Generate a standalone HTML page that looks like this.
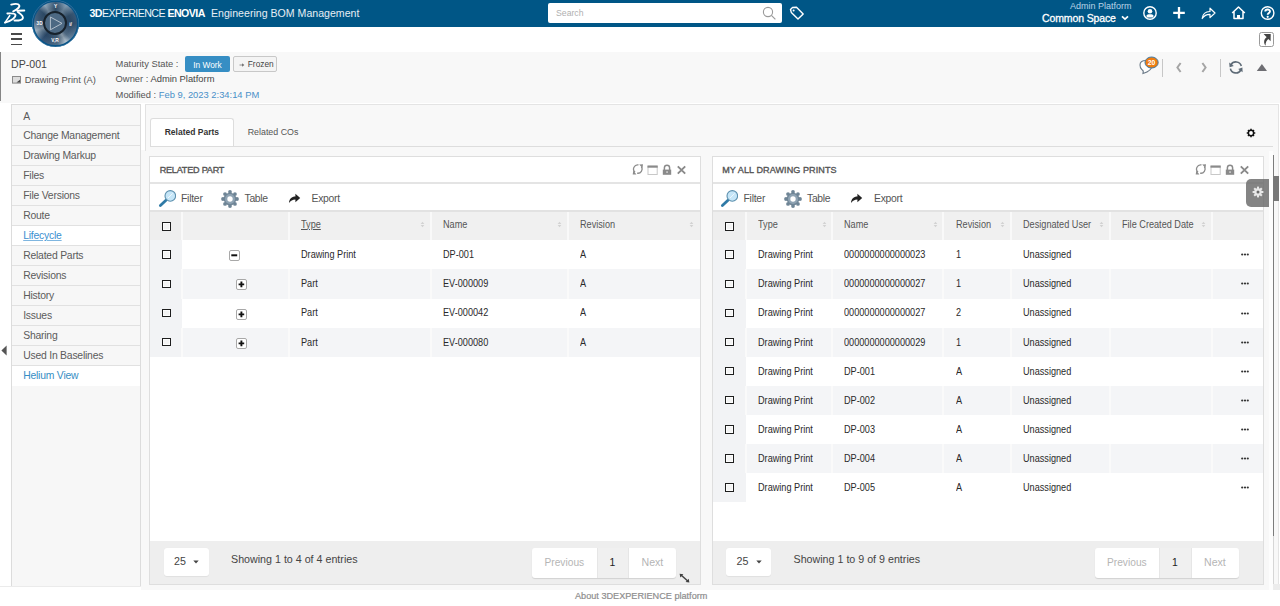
<!DOCTYPE html>
<html><head><meta charset="utf-8">
<style>
*{margin:0;padding:0;box-sizing:border-box}
html,body{width:1280px;height:606px;overflow:hidden;background:#fff;font-family:"Liberation Sans",sans-serif;color:#333}
.a{position:absolute}
.t{position:absolute;white-space:pre;line-height:1}
#top{left:0;top:0;width:1280px;height:27px;background:#005686}
#band{left:0;top:52px;width:1280px;height:51px;background:#f8f8f8}
#side{left:11px;top:104px;width:130px;height:482px;background:#f7f7f7;border:1px solid #dcdcdc;border-bottom:none}
.si{position:absolute;left:0;width:128px;height:20px;border-bottom:1px solid #e1e1e1;font-size:10.4px;letter-spacing:-0.22px;color:#5b5b5b;padding-left:11.2px;line-height:19.5px;white-space:pre}
#content{left:145px;top:104px;width:1134px;height:486px;background:#f8f8f8;border-top:1px solid #e4e4e4;border-right:1px solid #e4e4e4}
.panel{position:absolute;top:156px;height:429px;background:#fff;border:1px solid #dedede}
.ph{position:absolute;left:0;top:0;right:0;height:27px;border-bottom:2px solid #e4e4e4;background:#fff}
.pt{position:absolute;left:9.7px;top:9px;font-size:9.05px;font-weight:normal;-webkit-text-stroke:0.35px #555;letter-spacing:-0.2px;color:#555;white-space:pre;line-height:1}
.tb{position:absolute;left:0;top:27px;right:0;height:28px;background:#fff;border-bottom:2px solid #e2e2e2}
.thd{position:absolute;left:0;top:55px;right:0;height:29px;background:#f0f0f0}
.row{position:absolute;left:0;right:0;height:29.2px}
.cb{position:absolute;width:8.8px;height:8.4px;border:1.6px solid #1e1e1e;border-radius:0;background:#f4f4f4;box-shadow:inset 0 0 0 0.7px #fff}
.cell{position:absolute;font-size:10.3px;color:#2a2a2a;white-space:pre;line-height:1;transform:scaleX(0.888);transform-origin:0 0}
.hcell{position:absolute;font-size:10.3px;color:#555;white-space:pre;line-height:1;transform:scaleX(0.888);transform-origin:0 0}
.foot{position:absolute;left:0;right:0;bottom:0;height:43px;background:#eeeeee}
.sel{position:absolute;left:13.5px;top:7px;width:45px;height:27.5px;background:#fff;border-radius:3px;box-shadow:0 0.5px 1px rgba(0,0,0,.06)}
.pg{position:absolute;top:6.7px;height:30px;background:#fff;border-radius:3px;box-shadow:0 1px 1px rgba(0,0,0,.12)}
</style></head><body>

<!-- TOP BAR -->
<div id="top" class="a">
  <svg class="a" style="left:0;top:0" width="32" height="27" viewBox="0 0 32 27">
    <g fill="none" stroke="#fff" stroke-linecap="round" stroke-linejoin="round">
      <path d="M11.2 4.6 C14 3.9 18.4 3.6 19.3 5.4 C20 7 16.5 9.8 13.2 11.4" stroke-width="1.9"/>
      <path d="M7.3 13.5 C10 13.3 14.6 13 15.4 14.6 C16.2 17.2 11.5 21.2 5 22.6" stroke-width="1.8"/>
      <path d="M9.8 15.5 L5 22.6" stroke-width="1.5"/>
      <path d="M17.2 10.7 L24.3 10.5" stroke-width="1.9"/>
      <path d="M17.9 12 C20 13.5 23.8 15.8 22.8 18.3 C22 20.2 17.5 20.6 14.5 20.5" stroke-width="1.9"/>
    </g>
  </svg>
  <div class="t" style="left:89.5px;top:7.6px;font-size:10.6px;color:#fff;letter-spacing:-0.53px"><b>3D</b><span style="color:#eef4f8">EXPERIENCE</span> <b>ENOVIA</b></div>
  <div class="t" style="left:211px;top:7.6px;font-size:10.6px;color:#e6eef5">Engineering BOM Management</div>
  <div class="a" style="left:548px;top:3px;width:234px;height:20px;background:#fff;border-radius:2px"></div>
  <div class="t" style="left:556px;top:9px;font-size:8.7px;color:#b0b0b0">Search</div>
  <svg class="a" style="left:762px;top:6px" width="15" height="15" viewBox="0 0 15 15"><circle cx="6" cy="6" r="4.6" fill="none" stroke="#9a9a9a" stroke-width="1.1"/><path d="M9.4 9.4 L13.4 13.4" stroke="#9a9a9a" stroke-width="1.2"/></svg>
  <svg class="a" style="left:789px;top:6px" width="16" height="15" viewBox="0 0 16 15"><path d="M1.5 3.5 L3.5 1.5 L7.5 1.2 L14.2 7.9 L9 13.1 L2.3 6.4 Z" fill="none" stroke="#fff" stroke-width="1.4" stroke-linejoin="round"/><circle cx="4.6" cy="4.4" r="1" fill="#fff"/></svg>
  <div class="t" style="left:1070px;top:2px;font-size:9px;color:#b9d3e6">Admin Platform</div>
  <div class="t" style="left:1042px;top:12.9px;font-size:10.5px;-webkit-text-stroke:0.3px #fff;letter-spacing:-0.12px;color:#fff">Common Space</div>
  <svg class="a" style="left:1120.5px;top:15.2px" width="8" height="6" viewBox="0 0 8 6"><path d="M1 1.4 L4 4.2 L7 1.4" fill="none" stroke="#fff" stroke-width="1.7"/></svg>
  <svg class="a" style="left:1142px;top:6px" width="16" height="15" viewBox="0 0 16 15"><circle cx="8" cy="7" r="6.2" fill="none" stroke="#fff" stroke-width="1.4"/><circle cx="8" cy="5.2" r="2.3" fill="#fff"/><path d="M4.6 11.4 V9.6 C4.8 7.8 11.2 7.8 11.4 9.6 V11.4 Z" fill="#fff"/></svg>
  <svg class="a" style="left:1172px;top:6px" width="14" height="14" viewBox="0 0 14 14"><path d="M7 1 V12.6 M1.2 6.8 H12.8" stroke="#fff" stroke-width="2.3"/></svg>
  <svg class="a" style="left:1201px;top:6px" width="15" height="14" viewBox="0 0 15 14"><path d="M1.2 12.5 C1.8 7.5 5 5.5 9 5.5 V2.2 L14 7 L9 11.6 V8.4 C5.5 8.3 3.2 9.5 1.2 12.5 Z" fill="none" stroke="#fff" stroke-width="1.2" stroke-linejoin="round"/></svg>
  <svg class="a" style="left:1231px;top:6px" width="15" height="14" viewBox="0 0 15 14"><path d="M1.2 7 L7.5 1 L13.8 7 M3 5.8 V12.5 H12 V5.8" fill="none" stroke="#fff" stroke-width="1.5" stroke-linejoin="round"/><rect x="6" y="9" width="3" height="3.5" fill="#fff"/></svg>
  <svg class="a" style="left:1260px;top:6px" width="16" height="15" viewBox="0 0 16 15"><circle cx="7.6" cy="7" r="6.3" fill="none" stroke="#fff" stroke-width="1.4"/><path d="M5.3 5.4 C5.3 2.9 10 2.9 10 5.3 C10 7 7.7 7 7.7 8.8" fill="none" stroke="#fff" stroke-width="1.9"/><circle cx="7.7" cy="10.8" r="1.1" fill="#fff"/></svg>
</div>
<!-- compass -->
<div class="a" style="left:32px;top:0px;width:47px;height:47px;border-radius:50%;background:#0a5486;box-shadow:0 0 0 0.6px #3c7aa6 inset"></div>
<div class="a" style="left:34.3px;top:2.3px;width:42.4px;height:42.4px;border-radius:50%;background:conic-gradient(from 0deg,#3f5f7d 0deg,#8fa9bf 30deg,#3d5d7b 60deg,#38587a 90deg,#6d8aa5 135deg,#c2d2de 150deg,#56748f 175deg,#35567a 220deg,#7e99b1 240deg,#adc0d0 250deg,#4b6a88 280deg,#3a5a79 310deg,#9cb3c6 330deg,#3f5f7d 360deg)"></div>
<div class="a" style="left:34.3px;top:2.3px;width:42.4px;height:42.4px;border-radius:50%;background:radial-gradient(circle,rgba(20,40,60,0.35) 50%,rgba(20,40,60,0) 75%,rgba(200,220,235,0.25) 100%)"></div>
<div class="a" style="left:43.2px;top:11.2px;width:24px;height:24px;border-radius:50%;background:#4d6983;border:2.2px solid #17222c"></div>
<svg class="a" style="left:30px;top:-1px" width="51" height="50" viewBox="0 0 51 50">
  <path d="M20.4 18 L32 24.4 L20.4 30.8 Z" fill="none" stroke="#bfcad4" stroke-width="0.9" stroke-linejoin="round"/>
  <text x="6.6" y="26" font-family="Liberation Sans" font-size="4.6" font-weight="bold" fill="#fff">3D</text>
  <text x="21.2" y="43" font-family="Liberation Sans" font-size="4.8" font-weight="bold" fill="#fff">V,R</text>
  <text x="24" y="9.4" font-family="Liberation Sans" font-size="4.8" font-weight="bold" fill="#fff">Y</text>
  <text x="39.2" y="27" font-family="Liberation Sans" font-size="5" font-weight="bold" fill="#fff">i/</text>
</svg>
<!-- hamburger -->
<div class="a" style="left:11px;top:33px;width:11px;height:1.7px;background:#4a4a4a"></div>
<div class="a" style="left:11px;top:38.4px;width:11px;height:1.7px;background:#4a4a4a"></div>
<div class="a" style="left:11px;top:43.6px;width:11px;height:1.7px;background:#4a4a4a"></div>
<!-- top-right pin icon -->
<div class="a" style="left:1258.5px;top:32px;width:15px;height:14.8px;border:1.4px solid #9a9a9a;border-radius:2.5px;background:#fff"></div>
<svg class="a" style="left:1258.5px;top:32px" width="15" height="15" viewBox="0 0 15 15"><path d="M4.6 1.9 L11.7 1.9 L11.6 9.2 Z" fill="#444"/><path d="M8.8 4.4 C5 6.2 4 10.4 6.6 13.8 C6.4 10.6 7.4 8.2 10.4 6.6 Z" fill="#444"/></svg>


<!-- BAND -->
<div id="band" class="a">
  <div class="a" style="left:0;top:0;width:1.2px;height:48.5px;background:#858585"></div>
  <div class="t" style="left:11px;top:7px;font-size:10.6px;color:#444">DP-001</div>
  <svg class="a" style="left:12px;top:24px" width="9" height="8" viewBox="0 0 9 8"><rect x="0.5" y="0.5" width="8" height="6.6" fill="#ddd" stroke="#8a8a8a" stroke-width="1"/><path d="M4.5 6.6 L8 3.8 V6.6 Z" fill="#444"/></svg>
  <div class="t" style="left:24.7px;top:24px;font-size:9.37px;color:#555">Drawing Print (A)</div>
  <div class="t" style="left:115.6px;top:7.5px;font-size:9.35px;color:#555">Maturity State :</div>
  <div class="a" style="left:185px;top:4px;width:45px;height:16px;background:#368ec4;border-radius:2px"></div>
  <div class="t" style="left:193.3px;top:8.5px;font-size:8.3px;color:#fff">In Work</div>
  <div class="a" style="left:233px;top:4px;width:44px;height:16px;background:#f4f4f4;border:1px solid #c8c8c8;border-radius:2px"></div>
  <svg class="a" style="left:238.5px;top:9.5px" width="6" height="6" viewBox="0 0 6 6"><path d="M0.5 3 H4.5" stroke="#777" stroke-width="0.8"/><path d="M3 1.2 L5.4 3 L3 4.8 Z" fill="#777"/></svg>
  <div class="t" style="left:247.8px;top:8.4px;font-size:8.3px;color:#444">Frozen</div>
  <div class="t" style="left:115.6px;top:23.3px;font-size:9.37px;color:#555">Owner : <span style="color:#444">Admin Platform</span></div>
  <div class="t" style="left:115.6px;top:38.5px;font-size:9.37px;color:#555">Modified : <span style="color:#4a90c8">Feb 9, 2023 2:34:14 PM</span></div>
  <!-- right tools -->
  <svg class="a" style="left:1137px;top:3px" width="24" height="24" viewBox="0 0 24 24">
    <path d="M3 10 C3 7 5.5 5.5 9 5.5 C12.5 5.5 15 7.5 15 10.5 C15 14.5 11 17 6 18.5 C6.5 17 6.8 15.5 4.8 14.5 C3.5 13.5 3 12 3 10 Z" fill="#fff" stroke="#6b7a88" stroke-width="1.1"/>
    <ellipse cx="14.6" cy="7.5" rx="6.6" ry="5.5" fill="#ef7d11" stroke="#3d7aa8" stroke-width="1"/>
    <text x="14.6" y="9.9" text-anchor="middle" font-family="Liberation Sans" font-size="6.8" font-weight="bold" fill="#fff">20</text>
  </svg>
  <div class="a" style="left:1162px;top:6.5px;width:1px;height:18px;background:#c7c7c7"></div>
  <svg class="a" style="left:1175px;top:10px" width="8" height="11" viewBox="0 0 8 11"><path d="M5.6 1 L2.4 5.5 L5.6 10" fill="none" stroke="#a5a5a5" stroke-width="2"/></svg>
  <svg class="a" style="left:1200px;top:10px" width="8" height="11" viewBox="0 0 8 11"><path d="M2.4 1 L5.6 5.5 L2.4 10" fill="none" stroke="#a5a5a5" stroke-width="2"/></svg>
  <div class="a" style="left:1220px;top:6.5px;width:1px;height:18px;background:#c7c7c7"></div>
  <svg class="a" style="left:1228px;top:8px" width="16" height="15" viewBox="0 0 16 15">
    <path d="M13.3 6 A5.6 5.6 0 0 0 3 4.8" fill="none" stroke="#5d6a76" stroke-width="1.6"/>
    <path d="M2.4 8.6 A5.6 5.6 0 0 0 12.8 10" fill="none" stroke="#5d6a76" stroke-width="1.6"/>
    <path d="M1.2 2.5 L1.6 7.2 L5.8 6 Z" fill="#5d6a76"/>
    <path d="M14.6 12.3 L14.4 7.6 L10.2 9 Z" fill="#5d6a76"/>
  </svg>
  <svg class="a" style="left:1256px;top:11px" width="12" height="9" viewBox="0 0 12 9"><path d="M0.8 8 L5.9 1 L11 8 Z" fill="#6e6e73"/></svg>
</div>

<!-- SIDEBAR -->
<div id="side" class="a">
  <div class="si" style="top:0;height:21px;line-height:23.5px">A</div>
  <div class="si" style="top:21px">Change Management</div>
  <div class="si" style="top:41px">Drawing Markup</div>
  <div class="si" style="top:61px">Files</div>
  <div class="si" style="top:81px">File Versions</div>
  <div class="si" style="top:101px">Route</div>
  <div class="si" style="top:121px;background:#fff;color:#3a8fd0;text-decoration:underline;text-decoration-thickness:0.8px;text-underline-offset:1px;text-decoration-color:#7fb6e0">Lifecycle</div>
  <div class="si" style="top:141px">Related Parts</div>
  <div class="si" style="top:161px">Revisions</div>
  <div class="si" style="top:181px">History</div>
  <div class="si" style="top:201px">Issues</div>
  <div class="si" style="top:221px">Sharing</div>
  <div class="si" style="top:241px">Used In Baselines</div>
  <div class="si" style="top:261px;background:#fff;color:#368ec4;border-bottom:none">Helium View</div>
</div>

<!-- CONTENT -->
<div class="a" style="left:0;top:586px;width:144px;height:1.4px;background:#ebebeb"></div>
<div class="a" style="left:141px;top:150px;width:4px;height:440px;background:#f8f8f8"></div>
<div id="content" class="a">
  <div class="a" style="left:0;top:0;width:1px;height:46px;background:#e2e2e2"></div>
  <div class="a" style="left:5px;top:13px;width:84px;height:29px;background:#fff;border:1px solid #dddddd;border-bottom:none;border-radius:3px 3px 0 0"></div>
  <div class="a" style="left:5px;top:41px;width:1123px;height:1px;background:#dddddd"></div>
  
  <div class="t" style="left:19.7px;top:22.9px;font-size:8.5px;font-weight:bold;color:#333">Related Parts</div>
  <div class="t" style="left:102.7px;top:22.9px;font-size:8.86px;color:#555">Related COs</div>
  <svg class="a" style="left:1100.5px;top:22.6px" width="10" height="10" viewBox="0 0 10 10"><g fill="#111"><circle cx="5" cy="5" r="3.4"/><rect x="4.3" y="0.7" width="1.4" height="2" transform="rotate(0 5 5)"/><rect x="4.3" y="0.7" width="1.4" height="2" transform="rotate(45 5 5)"/><rect x="4.3" y="0.7" width="1.4" height="2" transform="rotate(90 5 5)"/><rect x="4.3" y="0.7" width="1.4" height="2" transform="rotate(135 5 5)"/><rect x="4.3" y="0.7" width="1.4" height="2" transform="rotate(180 5 5)"/><rect x="4.3" y="0.7" width="1.4" height="2" transform="rotate(225 5 5)"/><rect x="4.3" y="0.7" width="1.4" height="2" transform="rotate(270 5 5)"/><rect x="4.3" y="0.7" width="1.4" height="2" transform="rotate(315 5 5)"/></g><circle cx="5" cy="5" r="1.9" fill="#fff"/></svg>
</div>
<div class="panel" style="left:149px;width:552px"><div class="ph"><div class="pt">RELATED PART</div><svg class="a" style="left:482px;top:7px" width="58" height="12" viewBox="0 0 58 12">
      <g fill="none" stroke="#8c8c8c" stroke-width="1.3" transform="translate(0.8 0)">
        <path d="M5.7 0.9 A4.2 4.2 0 0 0 2.2 8.2"/><path d="M4.3 9.15 A4.2 4.2 0 0 0 8.6 2.7"/>
      </g>
      <path d="M7.2 0.4 L11 0.3 L10.5 4.1 Z M4.4 10.4 L0.7 10.5 L1.3 6.6 Z" fill="#8c8c8c"/>
      <rect x="16" y="2.3" width="9.2" height="8.2" fill="none" stroke="#c8c8c8" stroke-width="1"/>
      <rect x="15.5" y="1.5" width="10.2" height="2.2" fill="#8a8a8a"/>
      <path d="M32.4 6 V3.8 A2.6 2.6 0 0 1 37.6 3.8 V6" fill="none" stroke="#8a8a8a" stroke-width="1.5"/>
      <rect x="30.8" y="5.6" width="8.4" height="5.2" fill="#8a8a8a"/>
      <rect x="34.3" y="7.2" width="1.5" height="1.8" fill="#d0d0d0"/>
      <path d="M45.8 2.3 L53.2 9.7 M53.2 2.3 L45.8 9.7" stroke="#8a8a8a" stroke-width="1.9"/>
    </svg></div><div class="tb"><svg class="a" style="left:7.5px;top:5.5px" width="18" height="18" viewBox="0 0 18 18">
      <path d="M2.4 15.5 L8 10.2" stroke="#2f7aa6" stroke-width="2.8" stroke-linecap="round"/>
      <circle cx="12.3" cy="5.9" r="5.3" fill="#c6e6f8" stroke="#5d90ae" stroke-width="1.1"/>
      <path d="M10 8 L14.6 3.4" stroke="#fff" stroke-width="0.9" opacity="0.8"/>
    </svg><div class="t" style="left:31px;top:10px;font-size:10.4px;letter-spacing:-0.25px;color:#555">Filter</div><svg class="a" style="left:71px;top:6px" width="18" height="18" viewBox="0 0 18 18">
      <circle cx="16.00" cy="9.00" r="1.9" fill="#6f8596"/><circle cx="13.95" cy="13.95" r="1.9" fill="#6f8596"/><circle cx="9.00" cy="16.00" r="1.9" fill="#6f8596"/><circle cx="4.05" cy="13.95" r="1.9" fill="#6f8596"/><circle cx="2.00" cy="9.00" r="1.9" fill="#6f8596"/><circle cx="4.05" cy="4.05" r="1.9" fill="#6f8596"/><circle cx="9.00" cy="2.00" r="1.9" fill="#6f8596"/><circle cx="13.95" cy="4.05" r="1.9" fill="#6f8596"/><circle cx="9" cy="9" r="6.3" fill="#6f8596"/><circle cx="9" cy="9" r="5" fill="#8fa3b3"/><circle cx="9" cy="9" r="2.7" fill="#fff"/>
    </svg><div class="t" style="left:94.5px;top:10px;font-size:10.4px;letter-spacing:-0.3px;color:#555">Table</div><svg class="a" style="left:137.5px;top:8.5px" width="13" height="11" viewBox="0 0 13 11"><path d="M1 10 C1.2 5.8 3.8 3.6 7.4 3.6 V0.8 L12.2 5 L7.4 9.2 V6.4 C4.6 6.4 2.6 7.6 1 10 Z" fill="#222"/></svg><div class="t" style="left:161.5px;top:10px;font-size:10.4px;letter-spacing:-0.3px;color:#555">Export</div></div><div class="thd"><div class="a" style="left:0;top:0;width:32px;height:29px;background:#eeeeee"></div><div class="a" style="left:31px;top:0;width:2px;height:29px;background:#f9f9f9"></div><div class="a" style="left:138px;top:0;width:2px;height:29px;background:#f9f9f9"></div><div class="a" style="left:280px;top:0;width:2px;height:29px;background:#f9f9f9"></div><div class="a" style="left:417px;top:0;width:2px;height:29px;background:#f9f9f9"></div><div class="cb" style="left:12.3px;top:10.2px"></div><div class="hcell" style="top:7.5px;left:151px;text-decoration:underline;text-decoration-thickness:0.6px;text-underline-offset:1px;">Type</div><svg class="a" style="left:270.0px;top:8.5px" width="5" height="7" viewBox="0 0 5 7"><path d="M0.6 2.9 L2.5 0.7 L4.4 2.9 Z M0.6 4.1 L2.5 6.3 L4.4 4.1 Z" fill="#d2d2d2"/></svg><div class="hcell" style="top:7.5px;left:293px;">Name</div><svg class="a" style="left:407.0px;top:8.5px" width="5" height="7" viewBox="0 0 5 7"><path d="M0.6 2.9 L2.5 0.7 L4.4 2.9 Z M0.6 4.1 L2.5 6.3 L4.4 4.1 Z" fill="#d2d2d2"/></svg><div class="hcell" style="top:7.5px;left:430px;">Revision</div><svg class="a" style="left:539.0px;top:8.5px" width="5" height="7" viewBox="0 0 5 7"><path d="M0.6 2.9 L2.5 0.7 L4.4 2.9 Z M0.6 4.1 L2.5 6.3 L4.4 4.1 Z" fill="#d2d2d2"/></svg></div><div class="row" style="top:83.30px;background:#fff"><div class="a" style="left:0;top:0;width:32px;height:100%;background:#f2f3f5"></div><div class="cb" style="left:12.3px;top:10.2px"></div><svg class="a" style="left:79px;top:10px" width="11" height="11" viewBox="0 0 11 11"><rect x="0.5" y="0.5" width="10" height="10" rx="1.5" fill="#fff" stroke="#a8a8a8"/><path d="M2.3 5.3 H8.2" stroke="#111" stroke-width="2"/></svg><div class="cell" style="top:9.9px;left:151px">Drawing Print</div><div class="cell" style="top:9.9px;left:293px">DP-001</div><div class="cell" style="top:9.9px;left:430px">A</div></div><div class="row" style="top:112.41px;background:#f4f5f7"><div class="a" style="left:0;top:0;width:32px;height:100%;background:#f2f3f5"></div><div class="a" style="left:31px;top:0;width:2px;height:100%;background:#fafafa"></div><div class="a" style="left:138px;top:0;width:2px;height:100%;background:#fafafa"></div><div class="a" style="left:280px;top:0;width:2px;height:100%;background:#fafafa"></div><div class="a" style="left:417px;top:0;width:2px;height:100%;background:#fafafa"></div><div class="cb" style="left:12.3px;top:10.2px"></div><svg class="a" style="left:86px;top:10px" width="11" height="11" viewBox="0 0 11 11"><rect x="0.5" y="0.5" width="10" height="10" rx="1.5" fill="#fff" stroke="#a8a8a8"/><path d="M2.6 5.4 H8.2 M5.4 2.6 V8.2" stroke="#111" stroke-width="1.9"/></svg><div class="cell" style="top:9.9px;left:151px">Part</div><div class="cell" style="top:9.9px;left:293px">EV-000009</div><div class="cell" style="top:9.9px;left:430px">A</div></div><div class="row" style="top:141.52px;background:#fff"><div class="a" style="left:0;top:0;width:32px;height:100%;background:#f2f3f5"></div><div class="cb" style="left:12.3px;top:10.2px"></div><svg class="a" style="left:86px;top:10px" width="11" height="11" viewBox="0 0 11 11"><rect x="0.5" y="0.5" width="10" height="10" rx="1.5" fill="#fff" stroke="#a8a8a8"/><path d="M2.6 5.4 H8.2 M5.4 2.6 V8.2" stroke="#111" stroke-width="1.9"/></svg><div class="cell" style="top:9.9px;left:151px">Part</div><div class="cell" style="top:9.9px;left:293px">EV-000042</div><div class="cell" style="top:9.9px;left:430px">A</div></div><div class="row" style="top:170.63px;background:#f4f5f7"><div class="a" style="left:0;top:0;width:32px;height:100%;background:#f2f3f5"></div><div class="a" style="left:31px;top:0;width:2px;height:100%;background:#fafafa"></div><div class="a" style="left:138px;top:0;width:2px;height:100%;background:#fafafa"></div><div class="a" style="left:280px;top:0;width:2px;height:100%;background:#fafafa"></div><div class="a" style="left:417px;top:0;width:2px;height:100%;background:#fafafa"></div><div class="cb" style="left:12.3px;top:10.2px"></div><svg class="a" style="left:86px;top:10px" width="11" height="11" viewBox="0 0 11 11"><rect x="0.5" y="0.5" width="10" height="10" rx="1.5" fill="#fff" stroke="#a8a8a8"/><path d="M2.6 5.4 H8.2 M5.4 2.6 V8.2" stroke="#111" stroke-width="1.9"/></svg><div class="cell" style="top:9.9px;left:151px">Part</div><div class="cell" style="top:9.9px;left:293px">EV-000080</div><div class="cell" style="top:9.9px;left:430px">A</div></div><div class="foot"><div class="sel"><div class="t" style="left:10.5px;top:8px;font-size:10.7px;color:#444">25</div><svg class="a" style="left:29.5px;top:12px" width="6" height="4" viewBox="0 0 6 4"><path d="M0.3 0.5 H5.7 L3 3.5 Z" fill="#444"/></svg></div><div class="t" style="left:81px;top:13px;font-size:10.69px;color:#444">Showing 1 to 4 of 4 entries</div><div class="pg" style="left:382px;width:144px"><div class="t" style="left:12.5px;top:10.8px;font-size:10.2px;color:#b5b5b5">Previous</div><div class="a" style="left:64.5px;top:0;width:32.5px;height:30px;background:#f0f0f0;border-left:1px solid #e6e6e6;border-right:1px solid #e6e6e6"></div><div class="t" style="left:77.5px;top:10.8px;font-size:10.4px;color:#222">1</div><div class="t" style="left:109.5px;top:9.8px;font-size:10.6px;color:#b5b5b5">Next</div></div></div></div>
<div class="panel" style="left:711.5px;width:552px"><div class="ph"><div class="pt" style="letter-spacing:0.08px">MY ALL DRAWING PRINTS</div><svg class="a" style="left:482px;top:7px" width="58" height="12" viewBox="0 0 58 12">
      <g fill="none" stroke="#8c8c8c" stroke-width="1.3" transform="translate(0.8 0)">
        <path d="M5.7 0.9 A4.2 4.2 0 0 0 2.2 8.2"/><path d="M4.3 9.15 A4.2 4.2 0 0 0 8.6 2.7"/>
      </g>
      <path d="M7.2 0.4 L11 0.3 L10.5 4.1 Z M4.4 10.4 L0.7 10.5 L1.3 6.6 Z" fill="#8c8c8c"/>
      <rect x="16" y="2.3" width="9.2" height="8.2" fill="none" stroke="#c8c8c8" stroke-width="1"/>
      <rect x="15.5" y="1.5" width="10.2" height="2.2" fill="#8a8a8a"/>
      <path d="M32.4 6 V3.8 A2.6 2.6 0 0 1 37.6 3.8 V6" fill="none" stroke="#8a8a8a" stroke-width="1.5"/>
      <rect x="30.8" y="5.6" width="8.4" height="5.2" fill="#8a8a8a"/>
      <rect x="34.3" y="7.2" width="1.5" height="1.8" fill="#d0d0d0"/>
      <path d="M45.8 2.3 L53.2 9.7 M53.2 2.3 L45.8 9.7" stroke="#8a8a8a" stroke-width="1.9"/>
    </svg></div><div class="tb"><svg class="a" style="left:7.5px;top:5.5px" width="18" height="18" viewBox="0 0 18 18">
      <path d="M2.4 15.5 L8 10.2" stroke="#2f7aa6" stroke-width="2.8" stroke-linecap="round"/>
      <circle cx="12.3" cy="5.9" r="5.3" fill="#c6e6f8" stroke="#5d90ae" stroke-width="1.1"/>
      <path d="M10 8 L14.6 3.4" stroke="#fff" stroke-width="0.9" opacity="0.8"/>
    </svg><div class="t" style="left:31px;top:10px;font-size:10.4px;letter-spacing:-0.25px;color:#555">Filter</div><svg class="a" style="left:71px;top:6px" width="18" height="18" viewBox="0 0 18 18">
      <circle cx="16.00" cy="9.00" r="1.9" fill="#6f8596"/><circle cx="13.95" cy="13.95" r="1.9" fill="#6f8596"/><circle cx="9.00" cy="16.00" r="1.9" fill="#6f8596"/><circle cx="4.05" cy="13.95" r="1.9" fill="#6f8596"/><circle cx="2.00" cy="9.00" r="1.9" fill="#6f8596"/><circle cx="4.05" cy="4.05" r="1.9" fill="#6f8596"/><circle cx="9.00" cy="2.00" r="1.9" fill="#6f8596"/><circle cx="13.95" cy="4.05" r="1.9" fill="#6f8596"/><circle cx="9" cy="9" r="6.3" fill="#6f8596"/><circle cx="9" cy="9" r="5" fill="#8fa3b3"/><circle cx="9" cy="9" r="2.7" fill="#fff"/>
    </svg><div class="t" style="left:94.5px;top:10px;font-size:10.4px;letter-spacing:-0.3px;color:#555">Table</div><svg class="a" style="left:137.5px;top:8.5px" width="13" height="11" viewBox="0 0 13 11"><path d="M1 10 C1.2 5.8 3.8 3.6 7.4 3.6 V0.8 L12.2 5 L7.4 9.2 V6.4 C4.6 6.4 2.6 7.6 1 10 Z" fill="#222"/></svg><div class="t" style="left:161.5px;top:10px;font-size:10.4px;letter-spacing:-0.3px;color:#555">Export</div></div><div class="thd"><div class="a" style="left:0;top:0;width:33px;height:29px;background:#eeeeee"></div><div class="a" style="left:32px;top:0;width:2px;height:29px;background:#f9f9f9"></div><div class="a" style="left:118px;top:0;width:2px;height:29px;background:#f9f9f9"></div><div class="a" style="left:229px;top:0;width:2px;height:29px;background:#f9f9f9"></div><div class="a" style="left:297px;top:0;width:2px;height:29px;background:#f9f9f9"></div><div class="a" style="left:396px;top:0;width:2px;height:29px;background:#f9f9f9"></div><div class="a" style="left:498px;top:0;width:2px;height:29px;background:#f9f9f9"></div><div class="cb" style="left:12.3px;top:10.2px"></div><div class="hcell" style="top:7.5px;left:45px;">Type</div><svg class="a" style="left:109.0px;top:8.5px" width="5" height="7" viewBox="0 0 5 7"><path d="M0.6 2.9 L2.5 0.7 L4.4 2.9 Z M0.6 4.1 L2.5 6.3 L4.4 4.1 Z" fill="#d2d2d2"/></svg><div class="hcell" style="top:7.5px;left:131px;">Name</div><svg class="a" style="left:220.0px;top:8.5px" width="5" height="7" viewBox="0 0 5 7"><path d="M0.6 2.9 L2.5 0.7 L4.4 2.9 Z M0.6 4.1 L2.5 6.3 L4.4 4.1 Z" fill="#d2d2d2"/></svg><div class="hcell" style="top:7.5px;left:243px;">Revision</div><svg class="a" style="left:287.0px;top:8.5px" width="5" height="7" viewBox="0 0 5 7"><path d="M0.6 2.9 L2.5 0.7 L4.4 2.9 Z M0.6 4.1 L2.5 6.3 L4.4 4.1 Z" fill="#d2d2d2"/></svg><div class="hcell" style="top:7.5px;left:310px;">Designated User</div><svg class="a" style="left:386.0px;top:8.5px" width="5" height="7" viewBox="0 0 5 7"><path d="M0.6 2.9 L2.5 0.7 L4.4 2.9 Z M0.6 4.1 L2.5 6.3 L4.4 4.1 Z" fill="#d2d2d2"/></svg><div class="hcell" style="top:7.5px;left:409px;">File Created Date</div><svg class="a" style="left:488.0px;top:8.5px" width="5" height="7" viewBox="0 0 5 7"><path d="M0.6 2.9 L2.5 0.7 L4.4 2.9 Z M0.6 4.1 L2.5 6.3 L4.4 4.1 Z" fill="#d2d2d2"/></svg></div><div class="row" style="top:83.30px;background:#fff"><div class="a" style="left:0;top:0;width:33px;height:100%;background:#f2f3f5"></div><div class="cb" style="left:12.3px;top:10.2px"></div><div class="cell" style="top:9.9px;left:45px">Drawing Print</div><div class="cell" style="top:9.9px;left:131px">0000000000000023</div><div class="cell" style="top:9.9px;left:243px">1</div><div class="cell" style="top:9.9px;left:310px">Unassigned</div><svg class="a" style="left:528px;top:13px" width="8" height="3" viewBox="0 0 8 3"><circle cx="1.2" cy="1.5" r="1.1" fill="#333"/><circle cx="4" cy="1.5" r="1.1" fill="#333"/><circle cx="6.8" cy="1.5" r="1.1" fill="#333"/></svg></div><div class="row" style="top:112.41px;background:#f4f5f7"><div class="a" style="left:0;top:0;width:33px;height:100%;background:#f2f3f5"></div><div class="a" style="left:32px;top:0;width:2px;height:100%;background:#fafafa"></div><div class="a" style="left:118px;top:0;width:2px;height:100%;background:#fafafa"></div><div class="a" style="left:229px;top:0;width:2px;height:100%;background:#fafafa"></div><div class="a" style="left:297px;top:0;width:2px;height:100%;background:#fafafa"></div><div class="a" style="left:396px;top:0;width:2px;height:100%;background:#fafafa"></div><div class="a" style="left:498px;top:0;width:2px;height:100%;background:#fafafa"></div><div class="cb" style="left:12.3px;top:10.2px"></div><div class="cell" style="top:9.9px;left:45px">Drawing Print</div><div class="cell" style="top:9.9px;left:131px">0000000000000027</div><div class="cell" style="top:9.9px;left:243px">1</div><div class="cell" style="top:9.9px;left:310px">Unassigned</div><svg class="a" style="left:528px;top:13px" width="8" height="3" viewBox="0 0 8 3"><circle cx="1.2" cy="1.5" r="1.1" fill="#333"/><circle cx="4" cy="1.5" r="1.1" fill="#333"/><circle cx="6.8" cy="1.5" r="1.1" fill="#333"/></svg></div><div class="row" style="top:141.52px;background:#fff"><div class="a" style="left:0;top:0;width:33px;height:100%;background:#f2f3f5"></div><div class="cb" style="left:12.3px;top:10.2px"></div><div class="cell" style="top:9.9px;left:45px">Drawing Print</div><div class="cell" style="top:9.9px;left:131px">0000000000000027</div><div class="cell" style="top:9.9px;left:243px">2</div><div class="cell" style="top:9.9px;left:310px">Unassigned</div><svg class="a" style="left:528px;top:13px" width="8" height="3" viewBox="0 0 8 3"><circle cx="1.2" cy="1.5" r="1.1" fill="#333"/><circle cx="4" cy="1.5" r="1.1" fill="#333"/><circle cx="6.8" cy="1.5" r="1.1" fill="#333"/></svg></div><div class="row" style="top:170.63px;background:#f4f5f7"><div class="a" style="left:0;top:0;width:33px;height:100%;background:#f2f3f5"></div><div class="a" style="left:32px;top:0;width:2px;height:100%;background:#fafafa"></div><div class="a" style="left:118px;top:0;width:2px;height:100%;background:#fafafa"></div><div class="a" style="left:229px;top:0;width:2px;height:100%;background:#fafafa"></div><div class="a" style="left:297px;top:0;width:2px;height:100%;background:#fafafa"></div><div class="a" style="left:396px;top:0;width:2px;height:100%;background:#fafafa"></div><div class="a" style="left:498px;top:0;width:2px;height:100%;background:#fafafa"></div><div class="cb" style="left:12.3px;top:10.2px"></div><div class="cell" style="top:9.9px;left:45px">Drawing Print</div><div class="cell" style="top:9.9px;left:131px">0000000000000029</div><div class="cell" style="top:9.9px;left:243px">1</div><div class="cell" style="top:9.9px;left:310px">Unassigned</div><svg class="a" style="left:528px;top:13px" width="8" height="3" viewBox="0 0 8 3"><circle cx="1.2" cy="1.5" r="1.1" fill="#333"/><circle cx="4" cy="1.5" r="1.1" fill="#333"/><circle cx="6.8" cy="1.5" r="1.1" fill="#333"/></svg></div><div class="row" style="top:199.74px;background:#fff"><div class="a" style="left:0;top:0;width:33px;height:100%;background:#f2f3f5"></div><div class="cb" style="left:12.3px;top:10.2px"></div><div class="cell" style="top:9.9px;left:45px">Drawing Print</div><div class="cell" style="top:9.9px;left:131px">DP-001</div><div class="cell" style="top:9.9px;left:243px">A</div><div class="cell" style="top:9.9px;left:310px">Unassigned</div><svg class="a" style="left:528px;top:13px" width="8" height="3" viewBox="0 0 8 3"><circle cx="1.2" cy="1.5" r="1.1" fill="#333"/><circle cx="4" cy="1.5" r="1.1" fill="#333"/><circle cx="6.8" cy="1.5" r="1.1" fill="#333"/></svg></div><div class="row" style="top:228.85px;background:#f4f5f7"><div class="a" style="left:0;top:0;width:33px;height:100%;background:#f2f3f5"></div><div class="a" style="left:32px;top:0;width:2px;height:100%;background:#fafafa"></div><div class="a" style="left:118px;top:0;width:2px;height:100%;background:#fafafa"></div><div class="a" style="left:229px;top:0;width:2px;height:100%;background:#fafafa"></div><div class="a" style="left:297px;top:0;width:2px;height:100%;background:#fafafa"></div><div class="a" style="left:396px;top:0;width:2px;height:100%;background:#fafafa"></div><div class="a" style="left:498px;top:0;width:2px;height:100%;background:#fafafa"></div><div class="cb" style="left:12.3px;top:10.2px"></div><div class="cell" style="top:9.9px;left:45px">Drawing Print</div><div class="cell" style="top:9.9px;left:131px">DP-002</div><div class="cell" style="top:9.9px;left:243px">A</div><div class="cell" style="top:9.9px;left:310px">Unassigned</div><svg class="a" style="left:528px;top:13px" width="8" height="3" viewBox="0 0 8 3"><circle cx="1.2" cy="1.5" r="1.1" fill="#333"/><circle cx="4" cy="1.5" r="1.1" fill="#333"/><circle cx="6.8" cy="1.5" r="1.1" fill="#333"/></svg></div><div class="row" style="top:257.96px;background:#fff"><div class="a" style="left:0;top:0;width:33px;height:100%;background:#f2f3f5"></div><div class="cb" style="left:12.3px;top:10.2px"></div><div class="cell" style="top:9.9px;left:45px">Drawing Print</div><div class="cell" style="top:9.9px;left:131px">DP-003</div><div class="cell" style="top:9.9px;left:243px">A</div><div class="cell" style="top:9.9px;left:310px">Unassigned</div><svg class="a" style="left:528px;top:13px" width="8" height="3" viewBox="0 0 8 3"><circle cx="1.2" cy="1.5" r="1.1" fill="#333"/><circle cx="4" cy="1.5" r="1.1" fill="#333"/><circle cx="6.8" cy="1.5" r="1.1" fill="#333"/></svg></div><div class="row" style="top:287.07px;background:#f4f5f7"><div class="a" style="left:0;top:0;width:33px;height:100%;background:#f2f3f5"></div><div class="a" style="left:32px;top:0;width:2px;height:100%;background:#fafafa"></div><div class="a" style="left:118px;top:0;width:2px;height:100%;background:#fafafa"></div><div class="a" style="left:229px;top:0;width:2px;height:100%;background:#fafafa"></div><div class="a" style="left:297px;top:0;width:2px;height:100%;background:#fafafa"></div><div class="a" style="left:396px;top:0;width:2px;height:100%;background:#fafafa"></div><div class="a" style="left:498px;top:0;width:2px;height:100%;background:#fafafa"></div><div class="cb" style="left:12.3px;top:10.2px"></div><div class="cell" style="top:9.9px;left:45px">Drawing Print</div><div class="cell" style="top:9.9px;left:131px">DP-004</div><div class="cell" style="top:9.9px;left:243px">A</div><div class="cell" style="top:9.9px;left:310px">Unassigned</div><svg class="a" style="left:528px;top:13px" width="8" height="3" viewBox="0 0 8 3"><circle cx="1.2" cy="1.5" r="1.1" fill="#333"/><circle cx="4" cy="1.5" r="1.1" fill="#333"/><circle cx="6.8" cy="1.5" r="1.1" fill="#333"/></svg></div><div class="row" style="top:316.18px;background:#fff"><div class="a" style="left:0;top:0;width:33px;height:100%;background:#f2f3f5"></div><div class="cb" style="left:12.3px;top:10.2px"></div><div class="cell" style="top:9.9px;left:45px">Drawing Print</div><div class="cell" style="top:9.9px;left:131px">DP-005</div><div class="cell" style="top:9.9px;left:243px">A</div><div class="cell" style="top:9.9px;left:310px">Unassigned</div><svg class="a" style="left:528px;top:13px" width="8" height="3" viewBox="0 0 8 3"><circle cx="1.2" cy="1.5" r="1.1" fill="#333"/><circle cx="4" cy="1.5" r="1.1" fill="#333"/><circle cx="6.8" cy="1.5" r="1.1" fill="#333"/></svg></div><div class="foot"><div class="sel"><div class="t" style="left:10.5px;top:8px;font-size:10.7px;color:#444">25</div><svg class="a" style="left:29.5px;top:12px" width="6" height="4" viewBox="0 0 6 4"><path d="M0.3 0.5 H5.7 L3 3.5 Z" fill="#444"/></svg></div><div class="t" style="left:81px;top:13px;font-size:10.69px;color:#444">Showing 1 to 9 of 9 entries</div><div class="pg" style="left:382px;width:144px"><div class="t" style="left:12.5px;top:10.8px;font-size:10.2px;color:#b5b5b5">Previous</div><div class="a" style="left:64.5px;top:0;width:32.5px;height:30px;background:#f0f0f0;border-left:1px solid #e6e6e6;border-right:1px solid #e6e6e6"></div><div class="t" style="left:77.5px;top:10.8px;font-size:10.4px;color:#222">1</div><div class="t" style="left:109.5px;top:9.8px;font-size:10.6px;color:#b5b5b5">Next</div></div></div></div>
<div class="t" style="left:575px;top:591.5px;font-size:9.15px;-webkit-text-stroke:0.2px #8e8e8e;color:#8e8e8e">About 3DEXPERIENCE platform</div>
<svg class="a" style="left:679px;top:572.5px" width="11" height="10" viewBox="0 0 11 10"><path d="M2 2 L9 8.2" stroke="#404040" stroke-width="1.5"/><path d="M0.6 0.7 L4.4 1.2 L1.3 4.4 Z M10.4 9.4 L6.6 9 L9.7 5.8 Z" fill="#404040"/></svg>
<svg class="a" style="left:1px;top:345px" width="6" height="11" viewBox="0 0 6 11"><path d="M5.6 0.5 V10.5 L0.4 5.5 Z" fill="#555"/></svg>



<!-- right scroll strip -->
<div class="a" style="left:1269px;top:151px;width:4px;height:439px;background:#fdfdfd"></div>
<div class="a" style="left:1273px;top:155px;width:1.2px;height:381px;background:#7c7c7c"></div>
<div class="a" style="left:1273px;top:536px;width:1px;height:48px;background:#d6d6d6"></div>
<div class="a" style="left:1273.4px;top:176px;width:5.4px;height:25px;background:#777"></div>
<div class="a" style="left:1273px;top:584px;width:7px;height:6px;background:#ececec"></div>
<!-- gear tab -->
<div class="a" style="left:1245.5px;top:179px;width:23.5px;height:27.5px;background:rgba(105,105,105,0.82);border-radius:5px 0 0 5px"></div>
<svg class="a" style="left:1251.5px;top:186px" width="12" height="12" viewBox="0 0 12 12"><g fill="#e8e8e8"><circle cx="6" cy="6" r="3.7"/><rect x="5" y="0.6" width="2" height="2.6" transform="rotate(0 6 6)"/><rect x="5" y="0.6" width="2" height="2.6" transform="rotate(45 6 6)"/><rect x="5" y="0.6" width="2" height="2.6" transform="rotate(90 6 6)"/><rect x="5" y="0.6" width="2" height="2.6" transform="rotate(135 6 6)"/><rect x="5" y="0.6" width="2" height="2.6" transform="rotate(180 6 6)"/><rect x="5" y="0.6" width="2" height="2.6" transform="rotate(225 6 6)"/><rect x="5" y="0.6" width="2" height="2.6" transform="rotate(270 6 6)"/><rect x="5" y="0.6" width="2" height="2.6" transform="rotate(315 6 6)"/></g><circle cx="6" cy="6" r="1.5" fill="#6a6a6a"/></svg>
</body></html>
